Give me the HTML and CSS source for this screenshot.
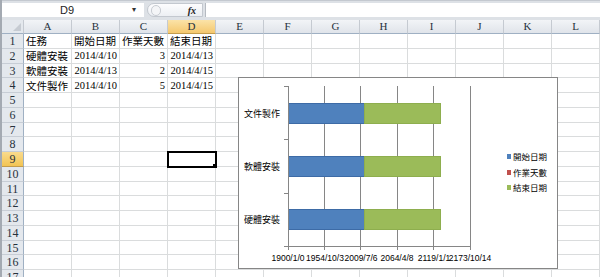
FILE: index.html
```html
<!DOCTYPE html>
<html lang="zh-Hant">
<head>
    <meta charset="UTF-8">
    <meta name="viewport" content="width=device-width, initial-scale=1.0">
    <title>工作進度</title>
    <link rel="stylesheet" href="styles.css">
</head>
<body>
    <div class="app">
        <div class="formula-bar">
            <div class="name-box">D9</div>
            <div class="name-arrow">&#9662;</div>
            <div class="fx-box">
                <span class="fx-knob"></span>
                <span class="fx">fx</span>
            </div>
            <div class="formula-input"></div>
        </div>

        <div class="sheet">
            <div class="corner"><span class="corner-mark"></span></div>
            <div class="ch">A</div><div class="ch">B</div><div class="ch">C</div><div class="ch sel">D</div><div class="ch">E</div><div class="ch">F</div>
            <div class="ch">G</div><div class="ch">H</div><div class="ch">I</div><div class="ch">J</div><div class="ch">K</div><div class="ch">L</div>

            <div class="rh">1</div>
            <div class="c">任務</div><div class="c">開始日期</div><div class="c">作業天數</div><div class="c">結束日期</div>
            <div class="c"></div><div class="c"></div><div class="c"></div><div class="c"></div><div class="c"></div><div class="c"></div><div class="c"></div><div class="c"></div>

            <div class="rh">2</div>
            <div class="c">硬體安裝</div><div class="c num">2014/4/10</div><div class="c num">3</div><div class="c num">2014/4/13</div>
            <div class="c"></div><div class="c"></div><div class="c"></div><div class="c"></div><div class="c"></div><div class="c"></div><div class="c"></div><div class="c"></div>

            <div class="rh">3</div>
            <div class="c">軟體安裝</div><div class="c num">2014/4/13</div><div class="c num">2</div><div class="c num">2014/4/15</div>
            <div class="c"></div><div class="c"></div><div class="c"></div><div class="c"></div><div class="c"></div><div class="c"></div><div class="c"></div><div class="c"></div>

            <div class="rh">4</div>
            <div class="c">文件製作</div><div class="c num">2014/4/10</div><div class="c num">5</div><div class="c num">2014/4/15</div>
            <div class="c"></div><div class="c"></div><div class="c"></div><div class="c"></div><div class="c"></div><div class="c"></div><div class="c"></div><div class="c"></div>

            <div class="rh">5</div>
            <div class="c"></div><div class="c"></div><div class="c"></div><div class="c"></div><div class="c"></div><div class="c"></div>
            <div class="c"></div><div class="c"></div><div class="c"></div><div class="c"></div><div class="c"></div><div class="c"></div>

            <div class="rh">6</div>
            <div class="c"></div><div class="c"></div><div class="c"></div><div class="c"></div><div class="c"></div><div class="c"></div>
            <div class="c"></div><div class="c"></div><div class="c"></div><div class="c"></div><div class="c"></div><div class="c"></div>

            <div class="rh">7</div>
            <div class="c"></div><div class="c"></div><div class="c"></div><div class="c"></div><div class="c"></div><div class="c"></div>
            <div class="c"></div><div class="c"></div><div class="c"></div><div class="c"></div><div class="c"></div><div class="c"></div>

            <div class="rh">8</div>
            <div class="c"></div><div class="c"></div><div class="c"></div><div class="c"></div><div class="c"></div><div class="c"></div>
            <div class="c"></div><div class="c"></div><div class="c"></div><div class="c"></div><div class="c"></div><div class="c"></div>

            <div class="rh sel">9</div>
            <div class="c"></div><div class="c"></div><div class="c"></div><div class="c active"></div><div class="c"></div><div class="c"></div>
            <div class="c"></div><div class="c"></div><div class="c"></div><div class="c"></div><div class="c"></div><div class="c"></div>

            <div class="rh">10</div>
            <div class="c"></div><div class="c"></div><div class="c"></div><div class="c"></div><div class="c"></div><div class="c"></div>
            <div class="c"></div><div class="c"></div><div class="c"></div><div class="c"></div><div class="c"></div><div class="c"></div>

            <div class="rh">11</div>
            <div class="c"></div><div class="c"></div><div class="c"></div><div class="c"></div><div class="c"></div><div class="c"></div>
            <div class="c"></div><div class="c"></div><div class="c"></div><div class="c"></div><div class="c"></div><div class="c"></div>

            <div class="rh">12</div>
            <div class="c"></div><div class="c"></div><div class="c"></div><div class="c"></div><div class="c"></div><div class="c"></div>
            <div class="c"></div><div class="c"></div><div class="c"></div><div class="c"></div><div class="c"></div><div class="c"></div>

            <div class="rh">13</div>
            <div class="c"></div><div class="c"></div><div class="c"></div><div class="c"></div><div class="c"></div><div class="c"></div>
            <div class="c"></div><div class="c"></div><div class="c"></div><div class="c"></div><div class="c"></div><div class="c"></div>

            <div class="rh">14</div>
            <div class="c"></div><div class="c"></div><div class="c"></div><div class="c"></div><div class="c"></div><div class="c"></div>
            <div class="c"></div><div class="c"></div><div class="c"></div><div class="c"></div><div class="c"></div><div class="c"></div>

            <div class="rh">15</div>
            <div class="c"></div><div class="c"></div><div class="c"></div><div class="c"></div><div class="c"></div><div class="c"></div>
            <div class="c"></div><div class="c"></div><div class="c"></div><div class="c"></div><div class="c"></div><div class="c"></div>

            <div class="rh">16</div>
            <div class="c"></div><div class="c"></div><div class="c"></div><div class="c"></div><div class="c"></div><div class="c"></div>
            <div class="c"></div><div class="c"></div><div class="c"></div><div class="c"></div><div class="c"></div><div class="c"></div>

            <div class="rh">17</div>
            <div class="c"></div><div class="c"></div><div class="c"></div><div class="c"></div><div class="c"></div><div class="c"></div>
            <div class="c"></div><div class="c"></div><div class="c"></div><div class="c"></div><div class="c"></div><div class="c"></div>
        </div>

        <!-- floating chart object -->
        <div class="chart">
            <svg class="chart-svg" width="318" height="190" viewBox="0 0 318 190">
                <g class="grid-lines">
                    <line x1="85.5" y1="8" x2="85.5" y2="172"/>
                    <line x1="121.5" y1="8" x2="121.5" y2="172"/>
                    <line x1="158.5" y1="8" x2="158.5" y2="172"/>
                    <line x1="194.5" y1="8" x2="194.5" y2="172"/>
                    <line x1="231.5" y1="8" x2="231.5" y2="172"/>
                </g>

                <!-- start date (blue) + end date (green), stacked -->
                <rect class="bar-start" x="49.5" y="25.5" width="76" height="20"/>
                <rect class="bar-end" x="125.5" y="25.5" width="76" height="20"/>
                <rect class="bar-start" x="49.5" y="78.5" width="76" height="20"/>
                <rect class="bar-end" x="125.5" y="78.5" width="76" height="20"/>
                <rect class="bar-start" x="49.5" y="131.5" width="76" height="20"/>
                <rect class="bar-end" x="125.5" y="131.5" width="76" height="20"/>

                <g class="axis">
                    <line x1="49.5" y1="8" x2="49.5" y2="172"/>
                    <line x1="49" y1="168.5" x2="232" y2="168.5"/>
                    <line x1="45" y1="8.5" x2="49" y2="8.5"/>
                    <line x1="45" y1="61.5" x2="49" y2="61.5"/>
                    <line x1="45" y1="115.5" x2="49" y2="115.5"/>
                    <line x1="45" y1="168.5" x2="49" y2="168.5"/>
                </g>

                <g class="cat-labels">
                    <text x="41" y="38.5">文件製作</text>
                    <text x="41" y="91.5">軟體安裝</text>
                    <text x="41" y="144.5">硬體安裝</text>
                </g>

                <g class="val-labels">
                    <text x="49" y="183">1900/1/0</text>
                    <text x="86" y="183">1954/10/3</text>
                    <text x="122" y="183">2009/7/6</text>
                    <text x="158" y="183">2064/4/8</text>
                    <text x="195" y="183">2119/1/1</text>
                    <text x="231" y="183">2173/10/14</text>
                </g>

                <g class="legend">
                    <rect x="268" y="76" width="4" height="5" fill="#4f81bd"/>
                    <text x="274" y="82">開始日期</text>
                    <rect x="268" y="92" width="4" height="5" fill="#c0504d"/>
                    <text x="274" y="98">作業天數</text>
                    <rect x="268" y="107" width="4" height="5" fill="#9bbb59"/>
                    <text x="274" y="113">結束日期</text>
                </g>
            </svg>
        </div>
    </div>
</body>
</html>
```

FILE: styles.css
```css
body {
    margin: 0;
    background: #fff;
    font-family: "Liberation Serif", "Noto Sans CJK TC", serif;
}
.app {
    position: relative;
    width: 600px;
    height: 277px;
    overflow: hidden;
    box-sizing: border-box;
    border-left: 2px solid #a4aab2;
}

/* formula bar */
.formula-bar {
    display: flex;
    height: 20px;
    box-sizing: border-box;
    padding: 2px 0 3px;
    background: #dde1e6;
    border-top: 1px solid #c4c9d0;
}
.name-box {
    width: 130px;
    background: #fff;
    font: 11px "Liberation Sans", sans-serif;
    line-height: 14px;
    text-align: center;
    color: #222;
}
.name-arrow {
    width: 12px;
    background: #fff;
    font-size: 8px;
    line-height: 14px;
    color: #333;
}
.fx-box {
    display: flex;
    align-items: center;
    justify-content: space-between;
    width: 56px;
    margin-left: 3px;
    padding: 0 6px 0 3px;
    box-sizing: border-box;
    border: 1px solid #c3c8cf;
    border-radius: 8px 0 0 8px;
    background: linear-gradient(#fdfdfe, #eceff3);
}
.fx-knob {
    width: 8px;
    height: 9px;
    border: 1px solid #c8ccd2;
    border-radius: 5px;
    background: #f4f5f7;
}
.fx {
    font: italic bold 10px "Liberation Serif", serif;
    color: #222;
}
.formula-input {
    flex: 1;
    margin-left: 2px;
    background: #fff;
    border-left: 1px solid #b5bac1;
}

/* grid */
.sheet {
    display: grid;
    grid-template-columns: 22px repeat(12, 48px);
    grid-template-rows: 14px repeat(17, 14.75px);
}
.corner {
    display: flex;
    align-items: flex-end;
    justify-content: flex-end;
    padding: 0 2px 2px 0;
    box-sizing: border-box;
    background: #e4e8ed;
    border-right: 1px solid #c5cad1;
    border-bottom: 1px solid #9fb0c3;
}
.corner-mark {
    width: 8px;
    height: 8px;
    background: #c6cbd2;
    clip-path: polygon(100% 0, 100% 100%, 0 100%);
}
.ch {
    box-sizing: border-box;
    background: linear-gradient(#f2f4f7, #e0e4ea);
    border-right: 1px solid #c5cad1;
    border-bottom: 1px solid #9fb0c3;
    font-size: 11px;
    line-height: 13px;
    text-align: center;
    color: #27313c;
}
.ch.sel {
    background: linear-gradient(#fbe3a8, #f4c86e);
    border-bottom-color: #c39c4c;
}
.rh {
    box-sizing: border-box;
    background: #e4e8ed;
    border-right: 1px solid #9fb0c3;
    border-bottom: 1px solid #c7cdd5;
    font-size: 12px;
    line-height: 14px;
    text-align: center;
    color: #27313c;
}
.rh.sel {
    background: linear-gradient(#fadb8d, #f3c453);
    border-bottom-color: #c39c4c;
}
.c {
    display: flex;
    align-items: center;
    padding: 0 2px;
    box-sizing: border-box;
    overflow: hidden;
    white-space: nowrap;
    border-right: 1px solid #dadcdd;
    border-bottom: 1px solid #dadcdd;
    font-size: 10.5px;
    color: #000;
}
.c.num {
    justify-content: flex-end;
}
.c.active {
    position: relative;
    outline: 2px solid #000;
    outline-offset: -1px;
}
.c.active::after {
    content: '';
    position: absolute;
    right: -3px;
    bottom: -3px;
    width: 4px;
    height: 4px;
    background: #000;
    border: 1px solid #fff;
}

/* chart */
.chart {
    position: absolute;
    left: 236px;
    top: 77px;
    width: 320px;
    height: 192px;
    box-sizing: border-box;
    border: 1px solid #868686;
    background: #fff;
}
.chart-svg {
    display: block;
    font-family: "Liberation Sans", "Noto Sans CJK TC", sans-serif;
    font-size: 9px;
}
.grid-lines line,
.axis line {
    stroke: #868686;
    stroke-width: 1;
}
.bar-start {
    fill: #4f81bd;
    stroke: #3d6ba6;
    stroke-width: 1;
}
.bar-end {
    fill: #9bbb59;
    stroke: #8eae4e;
    stroke-width: 1;
}
.cat-labels text {
    text-anchor: end;
    fill: #000;
}
.val-labels text {
    text-anchor: middle;
    font-size: 8.5px;
    fill: #000;
}
.legend text {
    fill: #000;
    font-size: 8.5px;
}
```
